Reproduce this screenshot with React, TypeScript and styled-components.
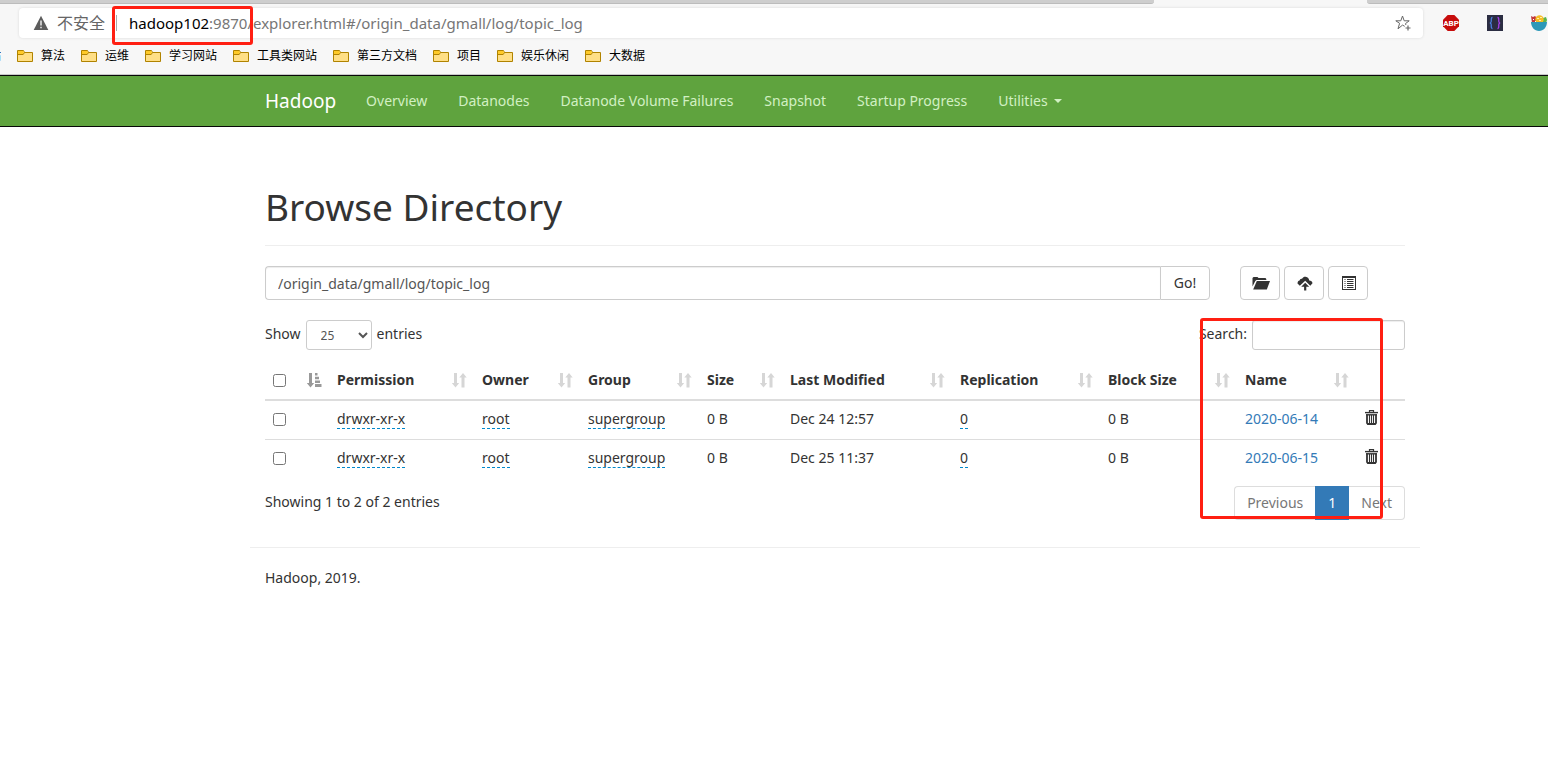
import React from "react";
import styled, { createGlobalStyle, css } from "styled-components";

const GlobalStyle = createGlobalStyle`
  *, *::before, *::after { box-sizing: border-box; }
  body {
    margin: 0;
    background: #fff;
    color: #333;
    font-family: "Noto Sans", "Noto Sans CJK SC", sans-serif;
    font-size: 14px;
    line-height: 20px;
  }
  button, input, select { font: inherit; color: inherit; }
`;

/* ---------- browser chrome ---------- */

const Chrome = styled.header`
  background: #f7f7f7;
  border-bottom: 1px solid #c8c8c8;
  overflow: hidden;
`;

const TabStrip = styled.div`
  display: flex;
  justify-content: space-between;
  height: 4px;
`;

const TabEdge = styled.div<{ $side: "left" | "right" }>`
  background: #cecece;
  border-bottom: 1px solid #bcbcbc;
  ${(p) =>
    p.$side === "left"
      ? css`
          flex: 1;
          margin-right: 213px;
          border-bottom-right-radius: 3px;
        `
      : css`
          width: 181px;
          border-bottom-left-radius: 3px;
        `}
`;

const Toolbar = styled.div`
  display: flex;
  align-items: center;
  height: 38px;
  padding: 0 1px 0 19px;
`;

const AddressBar = styled.div`
  position: relative;
  flex: 1;
  display: flex;
  align-items: center;
  height: 30px;
  padding: 0 12px 0 14px;
  background: #fff;
  border-radius: 4px;
  box-shadow: 0 0 3px rgba(0, 0, 0, 0.12);
  font-size: 16px;
  color: #767676;
`;

const Insecure = styled.span`
  display: flex;
  align-items: center;
  gap: 8px;
  padding-right: 11px;
  color: #666;
`;

const Divider = styled.span`
  width: 1px;
  height: 16px;
  margin-right: 12px;
  background: #aaa;
`;

const Url = styled.div`
  flex: 1;
  font-size: 15px;
  white-space: nowrap;
  b { font-weight: 400; color: #000; }
`;

const PlainButton = styled.button`
  display: inline-flex;
  padding: 0;
  border: 0;
  background: none;
  cursor: pointer;
`;

const RowAction = styled(PlainButton)`
  padding: 1px;
`;

const Extensions = styled.div`
  display: flex;
  gap: 28px;
  margin-left: 20px;
`;

const Bookmarks = styled.nav`
  display: flex;
  gap: 16px;
  height: 32px;
  padding-top: 4px;
  font-size: 12px;
`;

const Bookmark = styled.a`
  display: flex;
  align-items: center;
  gap: 8px;
  height: 20px;
  color: #000;
  text-decoration: none;
  white-space: nowrap;
`;

const CutBookmark = styled(Bookmark)`
  justify-content: flex-end;
  width: 1px;
  overflow: hidden;
`;

const Highlight = styled.div<{ $area: "host" | "names" }>`
  position: absolute;
  border: 3px solid #ff1f12;
  border-radius: 3px;
  pointer-events: none;
  ${(p) =>
    p.$area === "host"
      ? css`
          left: 93px;
          top: -2px;
          width: 141px;
          height: 39px;
          z-index: 2;
        `
      : css`
          right: 22px;
          top: -2px;
          width: 183px;
          height: 201px;
        `}
`;

/* ---------- site navigation ---------- */

const Navbar = styled.nav`
  display: flex;
  height: 52px;
  padding: 0 128px 0 250px;
  background: #5fa33e;
  border: solid #080808;
  border-width: 1px 0;
`;

const Brand = styled.a`
  padding: 15px;
  font-size: 19px;
  color: #fff;
  text-decoration: none;
`;

const NavLink = styled.a`
  display: flex;
  align-items: center;
  padding: 0 15px;
  color: #d2f0c3;
  text-decoration: none;
  white-space: nowrap;
  & + & { margin-left: 1px; }
`;

const Caret = styled.span`
  margin-left: 6px;
  border: 4px solid transparent;
  border-top-color: currentColor;
  border-bottom: 0;
`;

/* ---------- page ---------- */

const Container = styled.div`
  padding: 59px 128px 0 250px;
`;

const Main = styled.main`
  padding: 0 15px;
`;

const Title = styled.h1`
  margin: 0 0 20px;
  padding-bottom: 17px;
  border-bottom: 1px solid #eee;
  font-size: 37px;
  line-height: 42px;
  font-weight: 400;
`;

const PathRow = styled.div`
  display: flex;
  margin-bottom: 20px;
`;

const box = css`
  border: 1px solid #ccc;
  border-radius: 4px;
  background: #fff;
`;

const PathInput = styled.input`
  ${box}
  flex: 1;
  min-width: 0;
  height: 34px;
  padding: 0 12px;
  border-right: 0;
  border-radius: 4px 0 0 4px;
  box-shadow: inset 0 1px 1px rgba(0, 0, 0, 0.075);
  color: #555;
`;

const GoButton = styled.button`
  ${box}
  width: 50px;
  padding: 0;
  border-radius: 0 4px 4px 0;
`;

const Tools = styled.div`
  display: flex;
  gap: 4px;
  width: 165px;
  margin-left: 30px;
`;

const ToolButton = styled.button`
  ${box}
  display: flex;
  align-items: center;
  justify-content: center;
  width: 40px;
  height: 34px;
  padding: 0 0 0 2px;
`;

const TableArea = styled.section`
  position: relative;
`;

const Controls = styled.div`
  display: flex;
  justify-content: space-between;
  height: 41px;
`;

const Field = styled.label`
  display: flex;
  gap: 5px;
  line-height: 28px;
`;

const LengthSelect = styled.select`
  ${box}
  width: 66px;
  height: 30px;
  padding: 0 0 0 10px;
  border-radius: 3px;
  font-size: 12px;
  color: #555;
`;

const SearchInput = styled.input`
  ${box}
  width: 153px;
  height: 30px;
  padding: 0 10px;
  border-radius: 3px;
  box-shadow: inset 0 1px 1px rgba(0, 0, 0, 0.075);
`;

const Table = styled.table`
  width: 100%;
  table-layout: fixed;
  border-collapse: separate;
  border-spacing: 0;
  margin-bottom: 8px;
  white-space: nowrap;

  th, td {
    padding: 8px 0 0 8px;
    text-align: left;
    vertical-align: top;
  }
  th { height: 40px; padding-top: 10px; border-bottom: 2px solid #ddd; }
  td { height: 38px; }
  td > input { margin-top: 4px; }
  tr + tr td { height: 39px; border-top: 1px solid #ddd; }
`;

const HeadCell = styled.div`
  display: flex;
  justify-content: space-between;
  align-items: center;
  height: 18px;
  padding-right: 7px;
`;

const Check = styled.input.attrs({ type: "checkbox" })`
  display: block;
  width: 13px;
  height: 13px;
  margin: 0;
`;

const Editable = styled.span`
  display: inline-block;
  height: 20px;
  border-bottom: 1px dashed #08c;
`;

const NameLink = styled.a`
  color: #337ab7;
  text-decoration: none;
`;

const TableFoot = styled.div`
  display: flex;
  justify-content: space-between;
  line-height: 32px;
`;

const Pagination = styled.div`
  display: flex;
  height: 34px;
`;

const PageButton = styled.button<{ $active?: boolean; $end?: "left" | "right" }>`
  padding: 0 12px;
  border: 1px solid ${(p) => (p.$active ? "#337ab7" : "#ddd")};
  background: ${(p) => (p.$active ? "#337ab7" : "#fff")};
  color: ${(p) => (p.$active ? "#fff" : "#777")};
  ${(p) => p.$end === "left" && "border-radius: 4px 0 0 4px; border-right: 0;"}
  ${(p) => p.$end === "right" && "border-radius: 0 4px 4px 0; border-left: 0;"}
`;

const Footer = styled.footer`
  margin-top: 27px;
  padding: 20px 15px;
  border-top: 1px solid #eee;
`;

/* ---------- icons ---------- */

const FolderIcon = () => (
  <svg width="16" height="12" viewBox="0 0 16 12" aria-hidden="true">
    <path d="M.5 11.5V.5h6l1 2h8v9z" fill="#ffdf86" stroke="#b08300" />
    <path d="M1 1h5.300l.6 2-.6 1H1z" fill="#ffca28" />
    <path d="M.5 4.500h5.700l1.300-2" fill="none" stroke="#b08300" />
  </svg>
);

const WarningIcon = () => (
  <svg width="16" height="16" viewBox="0 0 16 16" aria-hidden="true">
    <path d="M8 .8 15.300 15H.7z" fill="#5c5c5c" />
    <path d="M8 5.500v5M8 11.800v1.500" stroke="#fff" strokeWidth="1.300" />
  </svg>
);

const StarIcon = () => (
  <svg width="16" height="16" viewBox="0 0 16 16" fill="none" stroke="#666" aria-hidden="true">
    <path d="M9.700 11.300 7.500 10.100 3 13.800l1.600-5.500L.8 5.800h5L7.500 1l1.700 4.800h5L10.500 8.600l.4 1.400" />
    <path d="M13 10.500v5M10.500 13h5" strokeWidth="1.200" />
  </svg>
);

const AbpIcon = () => (
  <svg width="16" height="16" viewBox="0 0 16 16" aria-hidden="true">
    <path d="M4.700 0h6.600L16 4.700v6.600L11.300 16H4.700L0 11.300V4.700z" fill="#c70d0c" />
    <text x="8" y="11" fontSize="8" fontWeight="700" textAnchor="middle" fill="#fff" fontFamily="Roboto, sans-serif">
      ABP
    </text>
  </svg>
);

const BracesIcon = () => (
  <svg width="16" height="16" viewBox="0 0 16 16" fill="none" strokeWidth="1.300" aria-hidden="true">
    <path d="M0 0h16v16H0z" fill="#2b2d42" />
    <path d="M5.500 2.500C3.800 2.500 4.400 5 4.200 6.500 4.100 7.500 3.500 8 2.800 8c.7 0 1.300.5 1.400 1.500.2 1.500-.4 4 1.300 4" stroke="#4a7fe0" />
    <path d="M10.500 2.500c1.700 0 1.100 2.500 1.300 4 .1 1 .7 1.500 1.400 1.500-.7 0-1.300.5-1.400 1.500-.2 1.500.4 4-1.300 4" stroke="#a63fea" />
  </svg>
);

const BowlIcon = () => (
  <svg width="16" height="16" viewBox="0 0 16 16" aria-hidden="true">
    <path d="M0 1l2 1 2-1 2 2v5H1z" fill="#c0393b" />
    <path d="M2 4h1v1H2zM4 6h1v1H4z" fill="#fff" />
    <path d="M12 3l3-1 1 3-1 3h-4z" fill="#5cb54a" />
    <circle cx="8.500" cy="4.500" r="4.200" fill="#f6bd27" />
    <path d="M6 3h2v1H6zM9 2h2v1H9zM8 5h2v1H8z" fill="#fff0a8" />
    <path d="M0 7h16c0 5-3.500 9-8 9S0 12 0 7z" fill="#2d98b8" />
  </svg>
);

const OpenFolderIcon = () => (
  <svg width="18" height="14" viewBox="0 0 18 14" fill="#333" aria-hidden="true">
    <path d="M.5 10.500V2l1-1h4l1 1h7l.8.900V4H4.500L3.300 5z" />
    <path d="M4.800 5H18l-3.200 8.500H1.200z" />
  </svg>
);

const CloudUploadIcon = () => (
  <svg width="16" height="16" viewBox="0 0 16 16" fill="#333" aria-hidden="true">
    <path d="M2.800 10.800.5 8.600C.5 6.700 1.500 5.800 2.600 5.600 2.700 4.300 3.900 3.400 5 3.800 5.900 2.100 7.300 1.500 8.700 1.700c2.100.2 3.400 1.900 3.500 3.800 1.800 0 3.300 1.200 3.300 2.800L13.300 10.800 8.200 5.800z" />
    <path d="m8.200 7.800 4 4H9.300v3.700H7.100v-3.700H4.200z" />
  </svg>
);

const ListIcon = () => (
  <svg width="14" height="14" viewBox="0 0 14 14" aria-hidden="true">
    <path d="M0 0h14v14H0z" fill="#333" />
    <path d="M1 2h12v11H1z" fill="#fff" />
    <path d="M2.500 3.500h1M2.500 5.500h1M2.500 7.500h1M2.500 9.500h1M2.500 11.500h1M5 3.500h6.500M5 5.500h6.500M5 7.500h6.500M5 9.500h6.500M5 11.500h6.500" stroke="#333" />
  </svg>
);

const SortIcon = ({ sorted = false }: { sorted?: boolean }) => (
  <svg width="15" height="15" viewBox="0 0 15 15" fill={sorted ? "#999" : "#d6d6d6"} aria-hidden="true">
    <path d="M2 0h3v10h2.200L3.500 14.500-.2 10H2z" />
    {sorted ? (
      <path d="M8 0h2.500v2.500H8zM8 3.700h4v2.500H8zM8 7.400h5v2.500H8zM8 11.100h6.500v2.900H8z" />
    ) : (
      <path d="M9.500 14.500V4.500H7.300L11 0l3.700 4.500h-2.200v10z" />
    )}
  </svg>
);

const TrashIcon = () => (
  <svg width="13" height="15" viewBox="0 0 13 15" fill="none" stroke="#333" aria-hidden="true">
    <path d="M4.500 2V.7h4V2" strokeWidth="1.200" />
    <path d="M0 2.600h13" strokeWidth="1.400" />
    <path d="M1 4.800h11" strokeWidth="1.400" />
    <path d="M2 4.500V13l.8 1h7.400l.8-1V4.500" strokeWidth="1.800" />
    <path d="M4.500 5v9M6.500 5v9M8.500 5v9" strokeWidth="1.100" />
  </svg>
);

/* ---------- data ---------- */

const bookmarks = ["算法", "运维", "学习网站", "工具类网站", "第三方文档", "项目", "娱乐休闲", "大数据"];
const navLinks = ["Overview", "Datanodes", "Datanode Volume Failures", "Snapshot", "Startup Progress"];
const columns = [
  { label: "Permission", width: 145 },
  { label: "Owner", width: 106 },
  { label: "Group", width: 119 },
  { label: "Size", width: 83 },
  { label: "Last Modified", width: 170 },
  { label: "Replication", width: 148 },
  { label: "Block Size", width: 137 },
  { label: "Name", width: 119 },
];
const Col = styled.col<{ $width: number }>`
  width: ${(p) => p.$width}px;
`;
const files = [
  { modified: "Dec 24 12:57", name: "2020-06-14" },
  { modified: "Dec 25 11:37", name: "2020-06-15" },
];

export default function App() {
  return (
    <>
      <GlobalStyle />
      <Chrome>
        <TabStrip>
          <TabEdge $side="left" />
          <TabEdge $side="right" />
        </TabStrip>
        <Toolbar>
          <AddressBar>
            <Insecure>
              <WarningIcon />
              不安全
            </Insecure>
            <Divider />
            <Url role="textbox" aria-label="Address" tabIndex={0}>
              <b>hadoop102</b>:9870/explorer.html#/origin_data/gmall/log/topic_log
            </Url>
            <PlainButton aria-label="Add to favorites">
              <StarIcon />
            </PlainButton>
            <Highlight $area="host" />
          </AddressBar>
          <Extensions>
            <PlainButton aria-label="Adblock Plus"><AbpIcon /></PlainButton>
            <PlainButton aria-label="JSON viewer"><BracesIcon /></PlainButton>
            <PlainButton aria-label="Infinity"><BowlIcon /></PlainButton>
          </Extensions>
        </Toolbar>
        <Bookmarks aria-label="Bookmarks">
          <CutBookmark href="#">站</CutBookmark>
          {bookmarks.map((b) => (
            <Bookmark href="#" key={b}>
              <FolderIcon />
              {b}
            </Bookmark>
          ))}
        </Bookmarks>
      </Chrome>

      <Navbar>
        <Brand href="#">Hadoop</Brand>
        {navLinks.map((l) => (
          <NavLink href="#" key={l}>{l}</NavLink>
        ))}
        <NavLink href="#">
          Utilities
          <Caret />
        </NavLink>
      </Navbar>

      <Container>
        <Main>
          <Title>Browse Directory</Title>
          <PathRow>
            <PathInput aria-label="Directory" defaultValue="/origin_data/gmall/log/topic_log" />
            <GoButton>Go!</GoButton>
            <Tools>
              <ToolButton aria-label="Create directory"><OpenFolderIcon /></ToolButton>
              <ToolButton aria-label="Upload files"><CloudUploadIcon /></ToolButton>
              <ToolButton aria-label="Cut and paste"><ListIcon /></ToolButton>
            </Tools>
          </PathRow>

          <TableArea>
            <Controls>
              <Field>
                Show
                <LengthSelect defaultValue="25">
                  <option>25</option>
                  <option>50</option>
                  <option>100</option>
                </LengthSelect>
                entries
              </Field>
              <Field>
                Search:
                <SearchInput type="search" />
              </Field>
            </Controls>

            <Table>
              <colgroup>
                <Col $width={64} />
                {columns.map((c) => <Col $width={c.width} key={c.label} />)}
                <Col $width={49} />
              </colgroup>
              <thead>
                <tr>
                  <th>
                    <HeadCell>
                      <Check aria-label="Select all" />
                      <SortIcon sorted />
                    </HeadCell>
                  </th>
                  {columns.map((c) => (
                    <th key={c.label}>
                      <HeadCell>
                        {c.label}
                        <SortIcon />
                      </HeadCell>
                    </th>
                  ))}
                  <th />
                </tr>
              </thead>
              <tbody>
                {files.map((f) => (
                  <tr key={f.name}>
                    <td><Check aria-label={`Select ${f.name}`} /></td>
                    <td><Editable>drwxr-xr-x</Editable></td>
                    <td><Editable>root</Editable></td>
                    <td><Editable>supergroup</Editable></td>
                    <td>0 B</td>
                    <td>{f.modified}</td>
                    <td><Editable>0</Editable></td>
                    <td>0 B</td>
                    <td><NameLink href="#">{f.name}</NameLink></td>
                    <td>
                      <RowAction aria-label={`Delete ${f.name}`}><TrashIcon /></RowAction>
                    </td>
                  </tr>
                ))}
              </tbody>
            </Table>

            <TableFoot>
              Showing 1 to 2 of 2 entries
              <Pagination>
                <PageButton $end="left">Previous</PageButton>
                <PageButton $active>1</PageButton>
                <PageButton $end="right">Next</PageButton>
              </Pagination>
            </TableFoot>
            <Highlight $area="names" />
          </TableArea>
        </Main>
        <Footer>Hadoop, 2019.</Footer>
      </Container>
    </>
  );
}
